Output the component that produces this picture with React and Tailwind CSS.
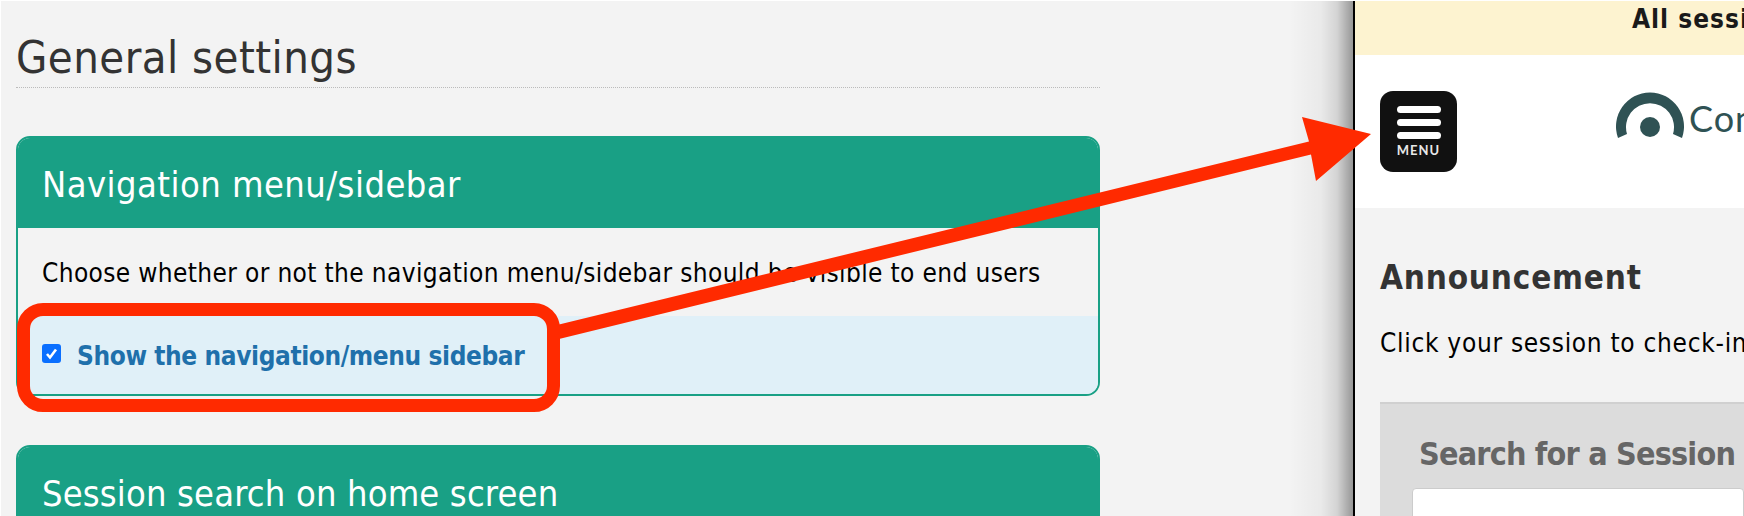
function Card({ title, titleClass, children }) {
  return (
    <section className="rounded-[14px] border-2 border-[#19a085] overflow-hidden">
      <h2 className={`h-[90px] bg-[#19a085] px-[24px] pt-[27px] text-[36px] leading-[40px] text-white font-normal ${titleClass}`}>
        {title}
      </h2>
      {children}
    </section>
  );
}

export default function App() {
  return (
    <div className="relative w-[1744px] h-[516px] overflow-hidden bg-white flex pt-px pl-px font-['DejaVu_Sans',sans-serif] font-stretch-condensed">
      <main className="relative w-[1352px] h-[515px] shrink-0 bg-[#f3f3f3] overflow-hidden pl-[15px] pr-[253px]">
        <h1 className="h-[87px] pt-[32px] text-[45px] leading-[50px] font-normal text-[#333] tracking-[0.45px] border-b border-dotted border-[#bbb]">
          General settings
        </h1>
        <div className="mt-[48px] flex flex-col gap-[49px]">
          <Card title="Navigation menu/sidebar" titleClass="tracking-[0.45px]">
            <p className="h-[88px] pl-[24px] pt-[29px] text-[26px] leading-[32px] text-black tracking-[0.36px]">
              Choose whether or not the navigation menu/sidebar should be visible to end users
            </p>
            <label className="h-[78px] bg-[#e0f0f8] flex items-center pl-[24px] pb-[3px] gap-[16px]">
              <span className="w-[19px] h-[19px] rounded-[3px] bg-[#0a6fff] flex items-center justify-center shrink-0">
                <svg width="15" height="15" viewBox="0 0 15 15" fill="none">
                  <path d="M3 8l3 3.5L12 3.5" stroke="#fff" strokeWidth="2.6" />
                </svg>
              </span>
              <span className="pt-[4px] text-[26px] leading-[32px] font-bold text-[#1f70ab] tracking-[-0.4px]">
                Show the navigation/menu sidebar
              </span>
            </label>
          </Card>
          <Card title="Session search on home screen" titleClass="tracking-[0.15px]" />
        </div>
        <div className="absolute right-0 top-0 bottom-0 w-[64px] bg-[linear-gradient(to_right,rgba(0,0,0,0)_0%,rgba(0,0,0,0.04)_50%,rgba(0,0,0,0.13)_75%,rgba(0,0,0,0.38)_100%)]" />
      </main>

      <aside className="w-[391px] h-[515px] shrink-0 border-l-2 border-black bg-[#f3f3f3] overflow-hidden flex flex-col">
        <div className="h-[54px] shrink-0 bg-[#fdf3d0] pl-[277px] text-[26px] leading-[36px] font-bold text-[#1a1a1a] whitespace-nowrap tracking-[1px]">
          All sessions
        </div>
        <header className="h-[153px] shrink-0 bg-white flex items-start pl-[25px] pt-[36px]">
          <button className="w-[77px] h-[81px] shrink-0 rounded-[13px] bg-[#111] flex flex-col items-center pt-[15px]">
            <span className="w-[44px] h-[7px] rounded-full bg-white" />
            <span className="w-[44px] h-[7px] rounded-full bg-white mt-[6px]" />
            <span className="w-[44px] h-[7px] rounded-full bg-white mt-[6px]" />
            <span className="text-[13px] leading-[12px] font-bold text-[#e8e8e8] mt-[5px] tracking-[1px] font-['Lato',sans-serif]">MENU</span>
          </button>
          <svg className="ml-[159px] mt-px shrink-0" width="68" height="48" viewBox="0 0 68 48">
            <path d="M2 46 A 34 34 0 1 1 66 46 L 57 42 A 24 24 0 1 0 11 42 Z" fill="#2f5254" />
            <circle cx="34" cy="35" r="10" fill="#2f5254" />
          </svg>
          <span className="ml-[5px] mt-[6px] text-[36px] leading-[42px] tracking-[1px] text-[#2f5254] font-['Lato',sans-serif] whitespace-nowrap">Con</span>
        </header>
        <div className="pl-[25px] whitespace-nowrap">
          <h2 className="mt-[50px] text-[33px] leading-[40px] font-bold text-[#333] tracking-[0.8px]">Announcement</h2>
          <p className="mt-[29px] text-[26px] leading-[32px] text-black tracking-[0.7px]">Click your session to check-in</p>
        </div>
        <div className="ml-[25px] mt-[43px] flex-1 bg-[#dcdcdc] border-t-2 border-[#d0d0d0] pl-[32px] pt-[30px] whitespace-nowrap">
          <div className="pl-[7px] text-[32px] leading-[40px] font-bold text-[#666] tracking-[-0.8px]">Search for a Session</div>
          <div className="mt-[14px] h-[60px] rounded-[4px] bg-white border border-[#ccc]" />
        </div>
      </aside>

      <div className="absolute left-[17px] top-[303px] w-[543px] h-[109px] rounded-[26px] border-[13px] border-[#ff2a00]" />
      <svg className="absolute left-0 top-0 pointer-events-none" width="1744" height="516" viewBox="0 0 1744 516">
        <path d="M557 325 L1309 141.500 L1302 117 L1371 134 L1316 181 L1311 154.500 L559 339 Z" fill="#ff2a00" />
      </svg>
    </div>
  );
}
